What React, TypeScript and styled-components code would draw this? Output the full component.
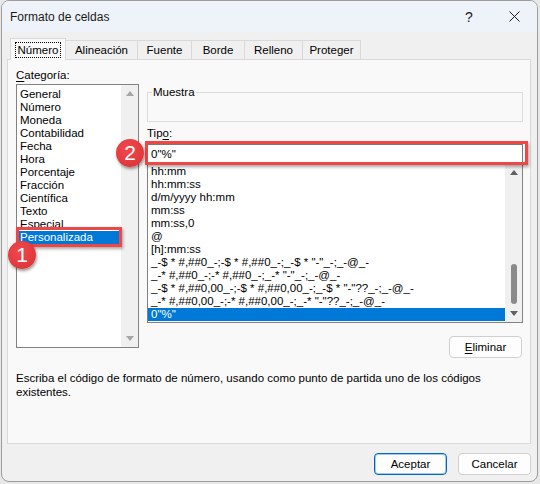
import React from 'react';
import styled, { createGlobalStyle } from 'styled-components';

const FONT = `"Liberation Sans", Arial, sans-serif`;

const Global = createGlobalStyle`
  html, body { margin: 0; padding: 0; background: #e8e8e8; }
  body { font-family: ${FONT}; font-size: 11.5px; color: #000; }
  * { box-sizing: border-box; }
`;

const Window = styled.div`
  width: 537px;
  height: 482px;
  margin-left: 1px;
  border: 1px solid #9c9c9c;
  border-radius: 8px;
  background: #f0f0f0;
  overflow: hidden;
  display: flex;
  flex-direction: column;
`;

const TitleBar = styled.div`
  height: 31px;
  flex: none;
  display: flex;
  align-items: center;
  background: #eef3f9;
  padding-left: 8px;
`;

const Title = styled.div`
  flex: 1;
  font-size: 12px;
  color: #1a1a1a;
`;

const CaptionButton = styled.div<{ $w: number }>`
  width: ${(p) => p.$w}px;
  height: 31px;
  display: flex;
  align-items: center;
  justify-content: center;
  font-size: 14px;
  color: #1a1a1a;
`;

const Content = styled.div`
  padding: 6px 6px 0 5px;
`;

const TabRow = styled.div`
  display: flex;
  align-items: flex-end;
  height: 22px;
  margin-bottom: -1px;
  padding-left: 3px;
  position: relative;
  z-index: 1;
`;

const Tab = styled.div<{ $w: number; $active?: boolean }>`
  width: ${(p) => p.$w}px;
  height: ${(p) => (p.$active ? 22 : 19)}px;
  margin-bottom: ${(p) => (p.$active ? 0 : 1)}px;
  margin-right: -1px;
  border: 1px solid #d9d9d9;
  border-bottom: none;
  background: ${(p) => (p.$active ? '#f9f9f9' : '#f0f0f0')};
  display: flex;
  align-items: center;
  justify-content: center;
`;

const FocusRect = styled.span`
  border: 1px dotted #000;
  padding: 0 2px;
  line-height: 14px;
`;

const Panel = styled.section`
  height: 385px;
  border: 1px solid #d9d9d9;
  background: #f9f9f9;
  padding: 8px 7px 0 8px;
  display: flex;
  flex-direction: column;
`;

const Columns = styled.div`
  display: grid;
  grid-template-columns: 123px 376px;
  column-gap: 8px;
`;

const Col = styled.div`
  display: flex;
  flex-direction: column;
`;

const FieldLabel = styled.div<{ $mt?: number }>`
  line-height: 15px;
  height: 15px;
  margin-top: ${(p) => p.$mt ?? 0}px;
  margin-bottom: 1px;
`;

const Mn = styled.span`
  text-decoration: underline;
  text-underline-offset: 2px;
`;

const ListBox = styled.div<{ $h: number; $noTop?: boolean }>`
  height: ${(p) => p.$h}px;
  border: 1px solid #828282;
  ${(p) => (p.$noTop ? 'border-top: none;' : '')}
  background: #fff;
  display: grid;
  grid-template-columns: 1fr 17px;
`;

const Items = styled.div<{ $pt: number }>`
  padding-top: ${(p) => p.$pt}px;
  min-width: 0;
`;

const Item = styled.div<{ $sel?: boolean; $mx: number; $pl: number }>`
  position: relative;
  height: 13px;
  line-height: 13px;
  margin: 0 ${(p) => p.$mx}px;
  padding-left: ${(p) => p.$pl}px;
  white-space: nowrap;
  background: ${(p) => (p.$sel ? '#0078d7' : 'transparent')};
  color: ${(p) => (p.$sel ? '#fff' : '#000')};
`;

const Callout = styled.div<{ $t: number; $r: number; $b: number; $l: number; $mt?: number }>`
  position: relative;
  margin-top: ${(p) => p.$mt ?? 0}px;
  &::after {
    content: '';
    position: absolute;
    top: ${(p) => -p.$t}px;
    right: ${(p) => -p.$r}px;
    bottom: ${(p) => -p.$b}px;
    left: ${(p) => -p.$l}px;
    border: 3px solid #ef4646;
    box-shadow: 1px 2px 3px rgba(0, 0, 0, 0.35);
    pointer-events: none;
    z-index: 2;
  }
`;

const Badge = styled.div<{ $x: number; $y: number }>`
  position: absolute;
  left: ${(p) => p.$x}px;
  top: ${(p) => p.$y}px;
  width: 28px;
  height: 28px;
  border-radius: 50%;
  background: radial-gradient(circle at 40% 35%, #f0494c 0%, #e23a3e 60%, #d3302f 100%);
  box-shadow: 1px 2px 3px rgba(0, 0, 0, 0.4);
  color: #fff;
  font-family: "Liberation Sans", Arial, sans-serif;
  font-size: 21px;
  line-height: 28px;
  text-align: center;
  z-index: 3;
`;

const ScrollBar = styled.div`
  background: #f0f0f0;
  display: flex;
  flex-direction: column;
  align-items: center;
  justify-content: space-between;
  padding: 6px 0 6px;
  position: relative;
`;

const Arrow = styled.div<{ $down?: boolean; $color: string }>`
  width: 0;
  height: 0;
  border-left: 4px solid transparent;
  border-right: 4px solid transparent;
  ${(p) =>
    p.$down
      ? `border-top: 5px solid ${p.$color};`
      : `border-bottom: 5px solid ${p.$color};`}
`;

const Thumb = styled.div`
  position: absolute;
  left: 6px;
  top: 100px;
  width: 6px;
  height: 40px;
  border-radius: 3px;
  background: #8a8a8a;
`;

const SampleBox = styled.fieldset`
  margin: 17px 0 0;
  padding: 0;
  border: 1px solid #dcdcdc;
  min-width: 0;
`;

const SampleLegend = styled.legend`
  margin-left: 4px;
  padding: 0 1px;
  line-height: 15px;
`;

const SampleBody = styled.div`
  height: 21px;
`;

const TypeInput = styled.input`
  display: block;
  width: 100%;
  height: 20px;
  margin: 0;
  border: 1px solid #7a7a7a;
  background: #fff;
  padding: 0 3px;
  font-family: ${FONT};
  font-size: 11.5px;
  color: #000;
  outline: none;
`;

const ActionRow = styled.div`
  display: flex;
  justify-content: flex-end;
  margin-top: 13px;
  padding-right: 1px;
`;

const Button = styled.div<{ $default?: boolean }>`
  width: 73px;
  height: 22px;
  border-radius: 4px;
  border: 1px solid ${(p) => (p.$default ? '#0067c0' : '#d0d0d0')};
  box-shadow: ${(p) => (p.$default ? 'inset 0 0 0 1px rgba(0,103,192,0.35)' : 'none')};
  background: #fdfdfd;
  display: flex;
  align-items: center;
  justify-content: center;
`;

const Description = styled.p`
  margin: 13px 0 0;
  line-height: 14px;
`;

const Footer = styled.div`
  display: flex;
  justify-content: flex-end;
  gap: 11px;
  padding-top: 9px;
`;

const categories = [
  'General', 'Número', 'Moneda', 'Contabilidad', 'Fecha', 'Hora', 'Porcentaje',
  'Fracción', 'Científica', 'Texto', 'Especial', 'Personalizada',
];

const types = [
  'hh:mm', 'hh:mm:ss', 'd/m/yyyy hh:mm', 'mm:ss', 'mm:ss,0', '@', '[h]:mm:ss',
  '_-$ * #,##0_-;-$ * #,##0_-;_-$ * "-"_-;_-@_-',
  '_-* #,##0_-;-* #,##0_-;_-* "-"_-;_-@_-',
  '_-$ * #,##0,00_-;-$ * #,##0,00_-;_-$ * "-"??_-;_-@_-',
  '_-* #,##0,00_-;-* #,##0,00_-;_-* "-"??_-;_-@_-',
  '0"%"',
];

const tabs: [string, number][] = [
  ['Número', 56], ['Alineación', 73], ['Fuente', 55], ['Borde', 54], ['Relleno', 59], ['Proteger', 59],
];

const CloseIcon = () => (
  <svg width="11" height="11" viewBox="0 0 11 11">
    <path d="M0.5 0.5 L10.5 10.5 M10.5 0.5 L0.5 10.5" stroke="#1a1a1a" strokeWidth="1" fill="none" />
  </svg>
);

export default function App() {
  return (
    <>
      <Global />
      <Window>
        <TitleBar>
          <Title>Formato de celdas</Title>
          <CaptionButton $w={44}>?</CaptionButton>
          <CaptionButton $w={46}><CloseIcon /></CaptionButton>
        </TitleBar>
        <Content>
          <TabRow>
            {tabs.map(([t, w], i) => (
              <Tab key={t} $w={w} $active={i === 0}>
                {i === 0 ? <FocusRect>{t}</FocusRect> : t}
              </Tab>
            ))}
          </TabRow>
          <Panel>
            <Columns>
              <Col>
                <FieldLabel><Mn>C</Mn>ategoría:</FieldLabel>
                <ListBox $h={264}>
                  <Items $pt={3}>
                    {categories.map((c) =>
                      c === 'Personalizada' ? (
                        <Callout key={c} $t={4} $r={1} $b={3} $l={1}>
                          <Item $sel $mx={2} $pl={1}>{c}</Item>
                          <Badge $x={-9} $y={10}>1</Badge>
                        </Callout>
                      ) : (
                        <Item key={c} $mx={2} $pl={1}>{c}</Item>
                      )
                    )}
                  </Items>
                  <ScrollBar>
                    <Arrow $color="#a6a6a6" />
                    <Arrow $down $color="#a6a6a6" />
                  </ScrollBar>
                </ListBox>
              </Col>
              <Col>
                <SampleBox>
                  <SampleLegend>Muestra</SampleLegend>
                  <SampleBody />
                </SampleBox>
                <FieldLabel $mt={4}>Tip<Mn>o</Mn>:</FieldLabel>
                <Callout $t={3} $r={5} $b={1} $l={2} $mt={2}>
                  <TypeInput readOnly value={'0"%"'} />
                  <Badge $x={-31} $y={-5}>2</Badge>
                </Callout>
                <ListBox $h={159} $noTop>
                  <Items $pt={1}>
                    {types.map((t, i) => (
                      <Item key={i} $sel={i === types.length - 1} $mx={0} $pl={3}>{t}</Item>
                    ))}
                  </Items>
                  <ScrollBar>
                    <Arrow $color="#606060" />
                    <Thumb />
                    <Arrow $down $color="#606060" />
                  </ScrollBar>
                </ListBox>
                <ActionRow>
                  <Button><Mn>E</Mn>liminar</Button>
                </ActionRow>
              </Col>
            </Columns>
            <Description>
              Escriba el código de formato de número, usando como punto de partida uno de los códigos existentes.
            </Description>
          </Panel>
          <Footer>
            <Button $default>Aceptar</Button>
            <Button>Cancelar</Button>
          </Footer>
        </Content>
      </Window>
    </>
  );
}
